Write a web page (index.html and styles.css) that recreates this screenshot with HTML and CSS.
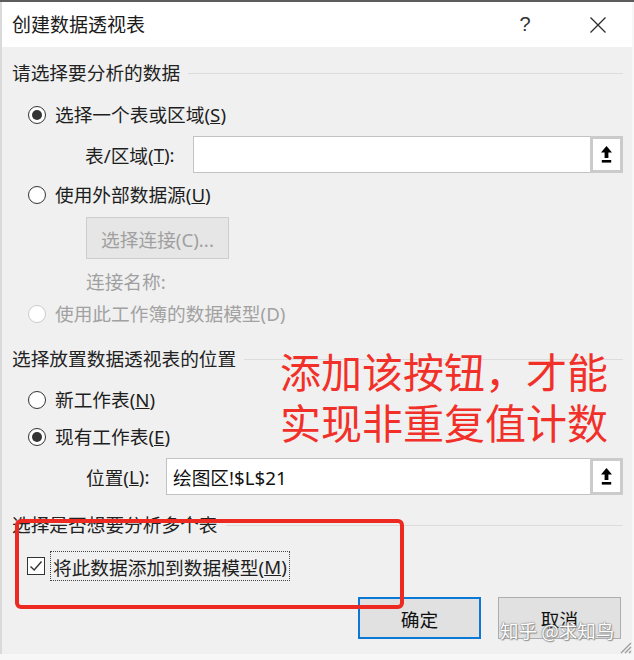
FILE: index.html
```html
<!DOCTYPE html>
<html lang="zh-CN">
<head>
<meta charset="utf-8">
<title>创建数据透视表</title>
<link rel="stylesheet" href="styles.css">
</head>
<body>
<div class="page">
  <div class="topstrip"></div>
  <div class="dialog">
    <div class="titlebar">
      <span class="title">创建数据透视表</span>
      <span class="help">?</span>
      <span class="close">
        <svg width="18" height="18" viewBox="0 0 18 18"><path d="M1.5 1.5 L16.5 16.5 M16.5 1.5 L1.5 16.5" stroke="#2b2b2b" stroke-width="1.3" fill="none"/></svg>
      </span>
    </div>
    <div class="content">
      <div class="section s-h1"><span>请选择要分析的数据</span><span class="rule"></span></div>

      <div class="radio-row r1"><span class="radio on"></span><span>选择一个表或区域(<u>S</u>)</span></div>

      <div class="field-row f1">
        <span class="field-label w1">表/区域(<u>T</u>):</span>
        <span class="input"></span>
        <span class="pick"><svg width="11" height="18" viewBox="0 0 11 18"><path d="M5.5 0 L11 6.5 H7.4 V12 H3.6 V6.5 H0 Z" fill="#000"/><rect x="0.8" y="14" width="9.4" height="2.6" fill="#000"/></svg></span>
      </div>

      <div class="radio-row r2"><span class="radio"></span><span>使用外部数据源(<u>U</u>)</span></div>

      <div class="conn-row"><span class="conn-btn">选择连接(C)...</span></div>

      <div class="conn-name">连接名称:</div>

      <div class="radio-row r3 disabled"><span class="radio"></span><span>使用此工作簿的数据模型(D)</span></div>

      <div class="section s-h2"><span>选择放置数据透视表的位置</span><span class="rule"></span></div>

      <div class="radio-row r4"><span class="radio"></span><span>新工作表(<u>N</u>)</span></div>

      <div class="radio-row r5"><span class="radio on"></span><span>现有工作表(<u>E</u>)</span></div>

      <div class="field-row f2">
        <span class="field-label w2">位置(<u>L</u>):</span>
        <span class="input"><span class="value">绘图区!$L$21</span></span>
        <span class="pick"><svg width="11" height="18" viewBox="0 0 11 18"><path d="M5.5 0 L11 6.5 H7.4 V12 H3.6 V6.5 H0 Z" fill="#000"/><rect x="0.8" y="14" width="9.4" height="2.6" fill="#000"/></svg></span>
      </div>

      <div class="section s-h3"><span>选择是否想要分析多个表</span><span class="rule"></span></div>

      <div class="check-row">
        <span class="checkbox"><svg width="18" height="18" viewBox="0 0 18 18"><path d="M3.5 9.5 L7.2 13 L14.5 4.5" stroke="#333" stroke-width="1.4" fill="none"/></svg></span>
        <span class="focus">将此数据添加到数据模型(<u>M</u>)</span>
      </div>

      <div class="buttons">
        <span class="btn default">确定</span>
        <span class="btn">取消</span>
      </div>
    </div>
    <svg class="grip" width="14" height="14" viewBox="0 0 14 14"><path d="M13 3 L3 13 M13 7 L7 13 M13 11 L11 13" stroke="#9a9a9a" stroke-width="1.2"/></svg>
  </div>

  <div class="note">添加该按钮，才能<br>实现非重复值计数</div>
  <div class="highlight"></div>
  <div class="watermark">知乎 @求知鸟</div>
</div>
</body>
</html>
```

FILE: styles.css
```css
html, body {
  margin: 0;
  padding: 0;
}
body {
  background: #f7f7f7;
  font-family: "Noto Sans", "Noto Sans CJK SC", sans-serif;
  font-size: 18.7px;
  color: #1e1e1e;
}
.page {
  position: relative;
  width: 634px;
  height: 660px;
  overflow: hidden;
}
.topstrip {
  height: 2px;
  background: #5c5c5c;
}
.dialog {
  position: relative;
  width: 632px;
  height: 652px;
  box-sizing: border-box;
  border-left: 2px solid #dadada;
  background: #f0f0f0;
}
.titlebar {
  height: 45px;
  background: #ffffff;
  display: flex;
  align-items: center;
  padding-left: 10px;
}
.title {
  font-size: 19px;
  line-height: 24px;
  color: #1a1a1a;
  flex: 1;
}
.help {
  font-size: 20px;
  font-family: "Liberation Sans", sans-serif;
  color: #333;
  width: 20px;
  text-align: center;
  margin-right: 54px;
}
.close {
  display: flex;
  width: 18px;
  height: 18px;
  margin-right: 25px;
}
.content {
  padding: 0 9px 0 10px;
}
.section {
  display: flex;
  align-items: center;
  height: 24px;
  line-height: 24px;
  color: #222;
  gap: 8px;
}
.rule {
  flex: 1;
  height: 0;
  border-top: 1px solid #dcdcdc;
}
.s-h1 { margin-top: 14px; }
.s-h2 { margin-top: 21px; }
.s-h3 { margin-top: 18px; }

.radio-row {
  display: flex;
  align-items: center;
  height: 24px;
  line-height: 24px;
  padding-left: 16px;
  gap: 9px;
}
.radio {
  width: 18px;
  height: 18px;
  box-sizing: border-box;
  border: 1.3px solid #333;
  border-radius: 50%;
  background: #fff;
  display: flex;
  align-items: center;
  justify-content: center;
}
.radio.on::after {
  content: "";
  width: 10px;
  height: 10px;
  border-radius: 50%;
  background: #333;
}
.disabled { color: #a2a2a2; }
.disabled .radio { border-color: #cccccc; }
.r1 { margin-top: 18px; }
.r2 { margin-top: 10px; }
.r3 { margin-top: 8px; }
.r4 { margin-top: 17px; }
.r5 { margin-top: 13px; }

.field-row {
  display: flex;
  align-items: stretch;
  height: 37px;
}
.f1 { margin-top: 9px; }
.f2 { margin-top: 9px; }
.field-label {
  display: flex;
  align-items: center;
  padding-left: 73px;
  box-sizing: border-box;
}
.w1 { width: 181px; }
.w2 { width: 154px; padding-left: 74px; }
.input {
  flex: 1;
  background: #fff;
  border: 1.5px solid #c3c3c3;
  border-right: none;
  display: flex;
  align-items: center;
  padding-left: 6px;
}
.value { color: #111; }
.pick {
  width: 33px;
  box-sizing: border-box;
  border: 3px solid #cbcbcb;
  background: #fff;
  display: flex;
  align-items: center;
  justify-content: center;
}

.conn-row { margin-top: 10px; padding-left: 74px; display: flex; }
.conn-btn {
  width: 143px;
  height: 42px;
  box-sizing: border-box;
  border: 1.5px solid #cdcdcd;
  background: #e6e6e6;
  color: #a0a0a0;
  display: flex;
  align-items: center;
  justify-content: center;
}
.conn-name {
  margin-top: 11px;
  padding-left: 74px;
  height: 24px;
  line-height: 24px;
  color: #a0a0a0;
}

.check-row {
  margin-top: 14px;
  height: 30px;
  display: flex;
  align-items: center;
  padding-left: 15px;
}
.checkbox {
  width: 18px;
  height: 18px;
  box-sizing: border-box;
  border: 1.3px solid #333;
  background: #fff;
  display: flex;
  margin-right: 5px;
}
.checkbox svg { margin: -1.3px; }
.focus {
  height: 30px;
  box-sizing: border-box;
  border: 1px dotted #444;
  padding: 0 2px;
  display: flex;
  align-items: center;
}

.buttons {
  margin-top: 16px;
  display: flex;
  justify-content: flex-end;
  gap: 17px;
  padding-right: 2px;
}
.btn {
  width: 123px;
  height: 42px;
  box-sizing: border-box;
  border: 1px solid #adadad;
  background: #e1e1e1;
  display: flex;
  align-items: center;
  justify-content: center;
  color: #111;
}
.btn.default { border: 2px solid #0a78d7; }

.grip {
  position: absolute;
  right: 0;
  bottom: 0;
}

.note {
  position: absolute;
  left: 280px;
  top: 345px;
  font-family: "Noto Sans CJK SC", sans-serif;
  font-size: 41px;
  line-height: 51px;
  color: #f2302a;
  white-space: nowrap;
}
.highlight {
  position: absolute;
  left: 15px;
  top: 519px;
  width: 389px;
  height: 90px;
  box-sizing: border-box;
  border: 4px solid #ec2a22;
  border-radius: 6px;
}
.watermark {
  position: absolute;
  left: 500px;
  top: 617px;
  font-family: "Noto Sans CJK SC", sans-serif;
  font-size: 18.5px;
  line-height: 26px;
  color: #ffffff;
  text-shadow: 0 0 1px #777, 0 0 2px #888, 1px 1px 1px #999;
  white-space: nowrap;
}
```
